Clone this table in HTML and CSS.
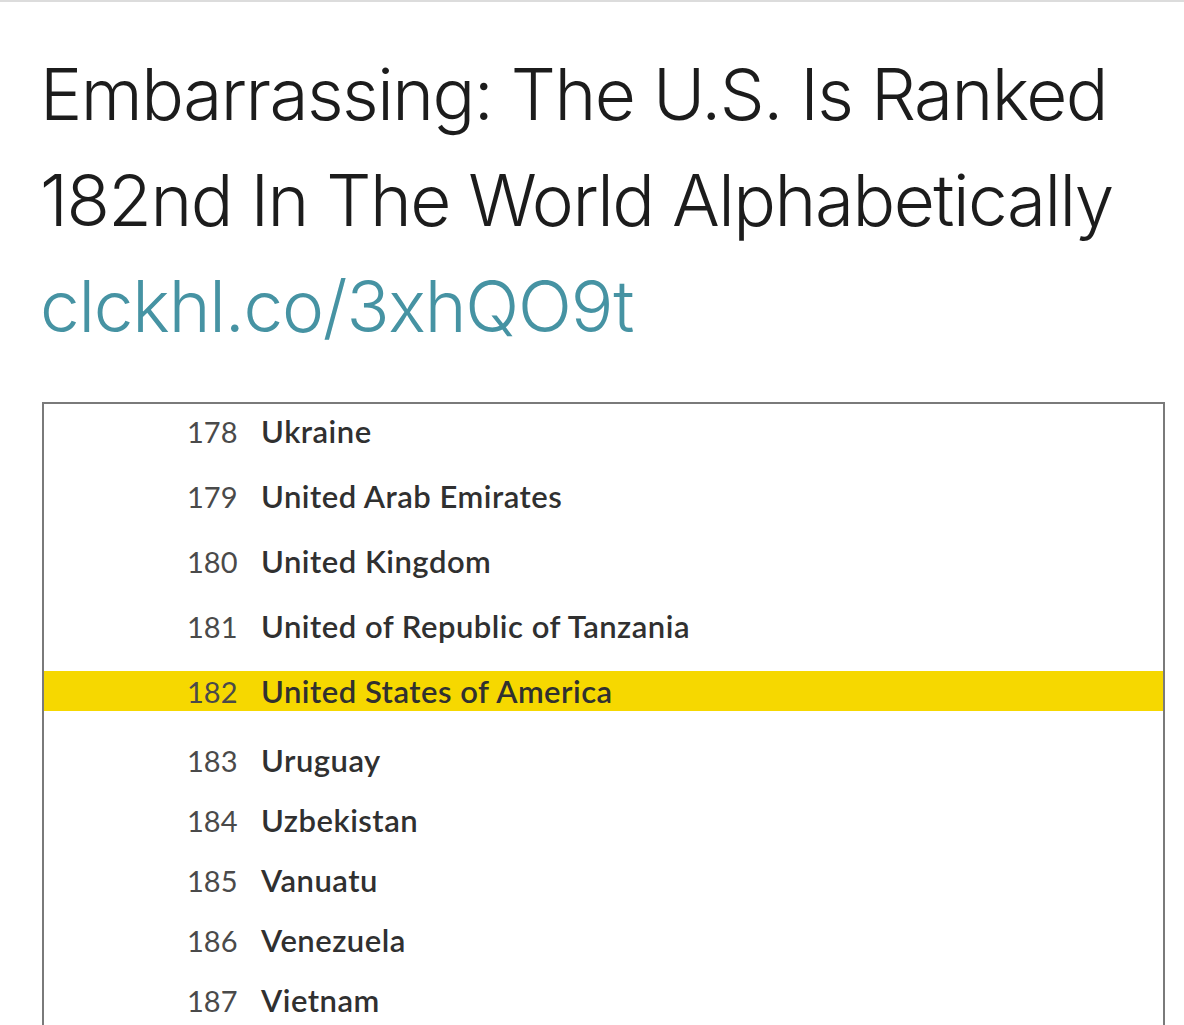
FILE: index.html
```html
<!DOCTYPE html>
<html lang="en">
<head>
<meta charset="utf-8">
<title>Embarrassing: The U.S. Is Ranked 182nd In The World Alphabetically</title>
<link rel="stylesheet" href="styles.css">
</head>
<body>
<div class="page">
  <header class="tweet">
    <h1 class="headline">Embarrassing: The U.S. Is Ranked<br>182nd In The World Alphabetically</h1>
    <a class="link" href="#">clckhl.co/3xhQO9t</a>
  </header>
  <section class="table">
    <ol class="rows rows-top">
      <li class="row"><span class="num">178</span><span class="name">Ukraine</span></li>
      <li class="row"><span class="num">179</span><span class="name">United Arab Emirates</span></li>
      <li class="row"><span class="num">180</span><span class="name">United Kingdom</span></li>
      <li class="row"><span class="num">181</span><span class="name">United of Republic of Tanzania</span></li>
      <li class="row row-hl"><span class="num">182</span><span class="name">United States of America</span></li>
    </ol>
    <ol class="rows rows-bottom">
      <li class="row"><span class="num">183</span><span class="name">Uruguay</span></li>
      <li class="row"><span class="num">184</span><span class="name">Uzbekistan</span></li>
      <li class="row"><span class="num">185</span><span class="name">Vanuatu</span></li>
      <li class="row"><span class="num">186</span><span class="name">Venezuela</span></li>
      <li class="row"><span class="num">187</span><span class="name">Vietnam</span></li>
    </ol>
  </section>
</div>
</body>
</html>
```

FILE: styles.css
```css
html, body {
  margin: 0;
  padding: 0;
  background: #ffffff;
}

body {
  overflow: hidden;
}

.page {
  border-top: 2px solid #dcdcdc;
  height: 1100px;
}

.tweet {
  padding: 39px 0 0 40px;
  display: flex;
  flex-direction: column;
}

.headline {
  margin: 0;
  font-family: "Inter", "Liberation Sans", sans-serif;
  font-weight: 300;
  font-size: 71px;
  line-height: 106px;
  letter-spacing: -1.5px;
  color: #1c1c1c;
}

.link {
  font-family: "Inter", "Liberation Sans", sans-serif;
  font-weight: 300;
  font-size: 71px;
  line-height: 106px;
  letter-spacing: -1.2px;
  color: #4693a3;
  text-decoration: none;
}

.table {
  margin: 43px 0 0 42px;
  width: 1119px;
  border: 2px solid #7a7a7a;
  border-bottom: none;
  padding: 7px 0 40px 0;
  font-family: "Lato", "Open Sans", sans-serif;
}

.rows {
  list-style: none;
  margin: 0;
  padding: 0;
  display: flex;
  flex-direction: column;
}

.rows-top {
  gap: 25px;
}

.rows-bottom {
  gap: 20px;
  margin-top: 29px;
}

.row {
  display: flex;
  align-items: center;
  height: 40px;
  padding-left: 143px;
}

.row-hl {
  background: #f6d800;
}

.num {
  width: 74px;
  font-size: 29px;
  color: #4a4a4a;
  font-weight: 400;
}

.name {
  font-size: 31px;
  letter-spacing: 0.5px;
  color: #303030;
  font-weight: 600;
}
```
